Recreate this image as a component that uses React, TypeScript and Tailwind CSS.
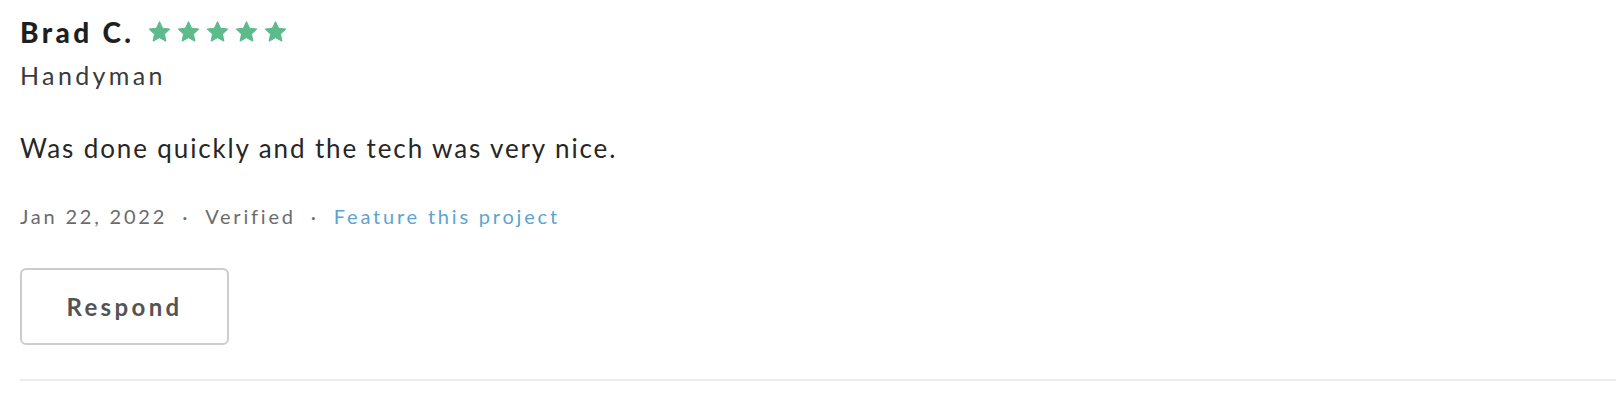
function Star() {
  return (
    <svg viewBox="0 0 24 24" className="h-[24px] w-[25px]" aria-hidden="true">
      <path
        d="M12 1.6l3.1 6.6 7.2.9-5.3 5 1.4 7.1L12 17.7l-6.4 3.5 1.4-7.1-5.3-5 7.2-.9z"
        fill="#5cba8b"
        stroke="#5cba8b"
        strokeWidth="1"
        strokeLinejoin="round"
      />
    </svg>
  );
}

export default function App() {
  return (
    <div className="min-h-[416px] w-full bg-white font-['Lato',sans-serif]">
      <div className="ml-[20px] border-b-2 border-[#ececec] pt-[16px] pb-[34px]">
        <div className="flex items-center gap-[13px]">
          <span className="text-[28px] leading-[32px] font-black tracking-[0.12em] text-[#1f1f1f]">
            Brad C.
          </span>
          <div className="flex gap-[4px]">
            <Star />
            <Star />
            <Star />
            <Star />
            <Star />
          </div>
        </div>

        <p className="mt-[13px] text-[25px] leading-[28px] tracking-[0.135em] text-[#3a3a3a]">
          Handyman
        </p>

        <p className="mt-[43px] text-[26px] leading-[32px] tracking-[0.072em] text-[#262626]">
          Was done quickly and the tech was very nice.
        </p>

        <div className="mt-[40px] flex items-center gap-[15px] text-[20px] leading-[24px] tracking-[0.14em] text-[#6b6b6b]">
          <span>Jan 22, 2022</span>
          <span>·</span>
          <span>Verified</span>
          <span>·</span>
          <a href="#" className="text-[#5ba3d3]">
            Feature this project
          </a>
        </div>

        <button
          type="button"
          className="mt-[40px] flex h-[77px] w-[209px] items-center justify-center rounded-[6px] border-2 border-[#cccccc] bg-white text-[24px] leading-[28px] font-bold tracking-[0.14em] text-[#545454]"
        >
          Respond
        </button>
      </div>
    </div>
  );
}
